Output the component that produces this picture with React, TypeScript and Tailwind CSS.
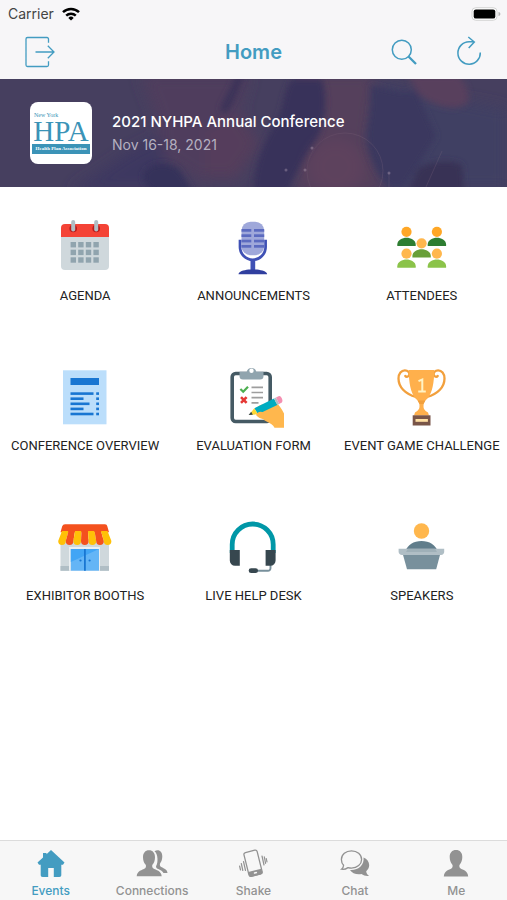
import { useState } from 'react';
import type { ReactNode } from 'react';

function AgendaIcon() {
  return (
    <svg viewBox="0 0 64 64" className="size-16" aria-hidden="true">
      <path d="M8 20h48v31a4 4 0 0 1-4 4H12a4 4 0 0 1-4-4z" fill="#cfd8dc" />
      <path d="M12 9h40a4 4 0 0 1 4 4v9H8v-9a4 4 0 0 1 4-4z" fill="#f44336" />
      <circle cx="20.2" cy="13.5" r="3.8" fill="#b71c1c" />
      <circle cx="43.2" cy="13.5" r="3.8" fill="#b71c1c" />
      <rect x="18.2" y="5" width="4" height="11.5" rx="2" fill="#b0bec5" />
      <rect x="41.2" y="5" width="4" height="11.5" rx="2" fill="#b0bec5" />
      {[27, 34.7, 42.3].map(y =>
        [17.6, 25.2, 32.8, 40.4].map(x => (
          <rect key={`${x}-${y}`} x={x} y={y} width="5.4" height="5.4" fill="#90a4ae" />
        )),
      )}
    </svg>
  );
}

function MicIcon() {
  return (
    <svg viewBox="0 0 64 64" className="size-16" aria-hidden="true">
      <rect x="20.5" y="6.7" width="22.7" height="33.5" rx="9" fill="#9fa8da" />
      {[14, 19.3, 24.7, 30].map(y => (
        <g key={y} fill="#5c6bc0">
          <rect x="20.5" y={y} width="9.8" height="2.7" />
          <rect x="33" y={y} width="10.2" height="2.7" />
        </g>
      ))}
      <path d="M19 24.7V32a12.8 12.8 0 0 0 25.6 0v-7.3" fill="none" stroke="#3f51b5" strokeWidth="2.7" />
      <path d="M29.5 44.5h4.7V56h-4.7z" fill="#3f51b5" />
      <path d="M17.5 59.3c0-3 5-4 10-4.8h8.6c5 .8 10 1.8 10 4.8z" fill="#303f9f" />
    </svg>
  );
}

function Person({ x, y, head, body }: { x: number; y: number; head: string; body: string }) {
  return (
    <g>
      <circle cx={x} cy={y} r="5.1" fill={head} />
      <path d={`M${x - 9.2} ${y + 14.2}v-1.5c0-4.500 5-6.800 9.200-6.800s9.200 2.300 9.200 6.800v1.500z`} fill={body} />
    </g>
  );
}

function AttendeesIcon() {
  return (
    <svg viewBox="0 0 64 64" className="size-16" aria-hidden="true">
      <Person x={16.5} y={16.8} head="#ffa726" body="#2e7d32" />
      <Person x={46.9} y={16.8} head="#ffa726" body="#2e7d32" />
      <Person x={31.6} y={28.3} head="#ffb74d" body="#689f38" />
      <Person x={16.5} y={38.6} head="#ffb74d" body="#8bc34a" />
      <Person x={46.9} y={38.6} head="#ffb74d" body="#8bc34a" />
    </svg>
  );
}

function OverviewIcon() {
  const rows = [[27.3, 23], [32.4, 13], [37.5, 19], [42.6, 13], [47.7, 23]];
  return (
    <svg viewBox="0 0 64 64" className="size-16" aria-hidden="true">
      <rect x="10" y="5.3" width="43.5" height="54" fill="#bbdefb" />
      <rect x="17.5" y="13" width="28.5" height="7" fill="#1976d2" />
      {rows.map(([y, w]) => (
        <g key={y} fill="#1976d2">
          <rect x="17.5" y={y} width={w} height="2.6" />
          <rect x="43.2" y={y} width="2.8" height="2.6" />
        </g>
      ))}
    </svg>
  );
}

function EvaluationIcon() {
  return (
    <svg viewBox="0 0 64 64" className="size-16" aria-hidden="true">
      <rect x="11.2" y="8.5" width="38" height="48" rx="3.5" fill="#fff" stroke="#455a64" strokeWidth="3.6" />
      <path d="M18.5 6.800h7.200a4.900 4.900 0 0 1 9.600 0h7.200v4.200a3.500 3.500 0 0 1-3.500 3.500H22a3.500 3.500 0 0 1-3.500-3.500z" fill="#90a4ae" />
      <circle cx="30.5" cy="5.8" r="2.2" fill="#fff" />
      <path d="M19.4 24l2.8 2.800 4.800-5" fill="none" stroke="#4caf50" strokeWidth="2.2" />
      <path d="M20 32.200l5.600 5.600m0-5.600L20 37.800" stroke="#e53935" strokeWidth="2.6" />
      <path d="M30.5 22.300h11.500M30.500 27.500h11.500M30.500 32.700h11.500M30.500 37.900h7" stroke="#9e9e9e" strokeWidth="1.7" />
      <path d="M34 44c3-2.500 5-4.500 9-4.500l13-1c2 1.500 4.500 5 7 10v14.300H53.500c-1.500-3-4-4.300-7.500-6-4-1.800-6-5-8-8.300z" fill="#ffb74d" />
      <path d="M33.300 43.300L53 33.600l3.300 6.300-19.400 9.300z" fill="#00acc1" />
      <path d="M53 33.600l2-1 3.200 6.400-1.900.9z" fill="#b0bec5" />
      <path d="M55 32.600l3-1.500c2-.7 4.800 4.800 2.700 6.300l-2.500 1.500z" fill="#f48fb1" />
      <path d="M33.300 43.300l3.600 6-8.900.7z" fill="#fdd835" />
      <path d="M30.200 46.800l1.700 2.900-4.300.4z" fill="#37474f" />
      <path d="M35 50c1.500-3.500 5-4 8-2.200l-1 6.200c-3-.5-5-1.800-7-4z" fill="#ffb74d" />
    </svg>
  );
}

function TrophyIcon() {
  return (
    <svg viewBox="0 0 64 64" className="size-16" aria-hidden="true">
      <g fill="none" stroke="#f2a03d" strokeWidth="2.3" strokeLinecap="round">
        <path d="M26 32C15 29 8.500 22 8.500 13.500c0-5 3-8.200 6.300-8.200 3.200 0 5 2.200 4.500 4.500-.4 2-3 2.600-4 1.200" />
        <path d="M37 32c11-3 17.500-10 17.500-18.500 0-5-3-8.200-6.300-8.200-3.200 0-5 2.200-4.500 4.500.4 2 3 2.600 4 1.200" />
      </g>
      <path d="M18.700 5h25.600c-.2 12.500-1.800 22.500-6.800 28.500-3 2.600-4 4.200-4 7.500 0 3.500 1.500 4.500 4.500 6.500l1 3H24l1-3c3-2 4.500-3 4.500-6.500 0-3.300-1-4.900-4-7.500-5-6-6.600-16-6.800-28.500z" fill="#ffb04c" />
      <path d="M27.500 35.500h8l-2 3.500h-4z" fill="#f2a03d" />
      <path d="M28.500 16.200l3.800-1.700v12M28.200 26.500h7.600" fill="none" stroke="#fff3c4" strokeWidth="2" />
      <rect x="22.7" y="50.3" width="17.8" height="10.2" fill="#795548" />
      <rect x="25.5" y="54" width="12.4" height="2.8" fill="#ffe0a3" />
    </svg>
  );
}

function BoothIcon() {
  const stripes = ['#ffc107', '#f4511e', '#ffc107', '#f4511e', '#ffc107', '#f4511e', '#ffc107'];
  return (
    <svg viewBox="0 0 64 64" className="size-16" aria-hidden="true">
      <path d="M7.5 24h48.500v31.700H7.500z" fill="#cfd8dc" />
      <path d="M7.5 51h9v4.700h-9zM47 51h9v4.700h-9z" fill="#b0bec5" />
      <path d="M16 32h31v23.700H16z" fill="#eceff1" />
      <path d="M17.800 34h28.200v21.700H17.800z" fill="#64b5f6" />
      <path d="M17.800 34H46L17.800 47z" fill="#42a5f5" />
      <path d="M31.900 34v21.700" stroke="#1976d2" strokeWidth="1.8" />
      <circle cx="27.5" cy="45.5" r="1.1" fill="#1976d2" />
      <circle cx="36.6" cy="45.5" r="1.1" fill="#1976d2" />
      <path d="M12 9.300h40a2.500 2.500 0 0 1 2.300 2l1.700 6H7.500l1.700-6a3 3 0 0 1 2.800-2z" fill="#f4511e" />
      {stripes.map((fill, i) => {
        // each stripe fans out from the roof bar to the scalloped edge
        const top = 9 + i * 6.5;
        const low = 5.2 + i * 7.6;
        return <path key={i} d={`M${top} 16h6.5L${low + 7.6} 26a3.8 4 0 0 1-7.6 0z`} fill={fill} />;
      })}
    </svg>
  );
}

function HeadsetIcon() {
  return (
    <svg viewBox="0 0 64 64" className="size-16" aria-hidden="true">
      <path d="M11.200 38V29.500a20.500 20.500 0 0 1 41 0V38" fill="none" stroke="#0097a7" strokeWidth="4.8" />
      <path d="M49.500 49v4.300a2.500 2.500 0 0 1-2.500 2.500H35" fill="none" stroke="#78909c" strokeWidth="1.9" />
      <path d="M8.800 35h10v15.700H14a5.200 5.200 0 0 1-5.200-5.200zM54.600 35h-10v15.700h4.800a5.200 5.200 0 0 0 5.200-5.200z" fill="#37474f" />
      <rect x="27.7" y="53.2" width="9.3" height="4.9" rx="2.4" fill="#37474f" />
    </svg>
  );
}

function SpeakerIcon() {
  return (
    <svg viewBox="0 0 64 64" className="size-16" aria-hidden="true">
      <circle cx="31.5" cy="16" r="7.7" fill="#ffb74d" />
      <path d="M15.500 36c2-6 8-10 16-10s14 4 16 10z" fill="#607d8b" />
      <path d="M12.500 38h38l-4.300 16.300H17z" fill="#78909c" />
      <path d="M8.600 33.800h45.600V37c0 1.500-1.300 3-3.200 3H12c-2 0-3.400-1.500-3.400-3z" fill="#b0bec5" />
      <path d="M18 33.800h27l2 3.200H16z" fill="#9fb0b8" />
    </svg>
  );
}

const MENU: { label: string; icon: ReactNode }[] = [
  { label: 'AGENDA', icon: <AgendaIcon /> },
  { label: 'ANNOUNCEMENTS', icon: <MicIcon /> },
  { label: 'ATTENDEES', icon: <AttendeesIcon /> },
  { label: 'CONFERENCE OVERVIEW', icon: <OverviewIcon /> },
  { label: 'EVALUATION FORM', icon: <EvaluationIcon /> },
  { label: 'EVENT GAME CHALLENGE', icon: <TrophyIcon /> },
  { label: 'EXHIBITOR BOOTHS', icon: <BoothIcon /> },
  { label: 'LIVE HELP DESK', icon: <HeadsetIcon /> },
  { label: 'SPEAKERS', icon: <SpeakerIcon /> },
];

const TABS: { label: string; icon: ReactNode }[] = [
  {
    label: 'Events',
    icon: <path d="M16 1l13.500 12.500-1.500 2.200h-1.700V26c0 1.300-.6 2-2 2h-5.500v-9h-5.600v9H7.700c-1.400 0-2-.7-2-2V15.700H4l-1.500-2.200L8 8.400V4h3.500v1.200z" />,
  },
  {
    label: 'Connections',
    icon: (
      <>
        <path d="M18.500 2.300c1-.7 2-1 3-1 3 0 4.800 2.400 4.800 6 0 3-.8 5.300-2 6.600-.8 1-.5 3 .5 3.800 2.500 1.700 6.500 2.200 6.700 6.300h-4c-1.500-3-5-3.600-6.700-4.800-.9-.7-1-2-.3-2.900C22 14 22.300 5 18.500 2.300z" />
        <path d="M13 1.200c3.800 0 6 2.700 6 7 0 3.200-.9 5.600-2.400 7.300-.7.900-.5 3.100.5 3.800 3 2 8.200 2.300 8.600 8H.7c.4-5.700 5.500-6 8.400-8 1-.7 1.200-2.900.4-3.800C8 13.800 7 11.400 7 8.200c0-4.300 2.200-7 6-7z" />
      </>
    ),
  },
  {
    label: 'Shake',
    icon: (
      <>
        <g transform="rotate(-14 16 14)">
          <rect x="9.2" y="2" width="13.6" height="24.5" rx="2" fill="none" stroke="currentColor" strokeWidth="1.3" />
          <path d="M9.200 21.500h13.600v3.500a2 2 0 0 1-2 2h-9.600a2 2 0 0 1-2-2z" />
          <rect x="14.3" y="23.3" width="3.4" height="1.6" rx=".8" fill="#f7f7f7" />
        </g>
        <path d="M6.500 12.500l2 9M4.300 14.500l1.500 7M2.600 17l.9 4M25 7l2 9M27.300 7.800l1.300 6.500M29.300 9.500l.7 3.500" fill="none" stroke="currentColor" strokeWidth="1.2" strokeLinecap="round" />
      </>
    ),
  },
  {
    label: 'Chat',
    icon: (
      <>
        <path d="M24.500 8.500c3.500 1.500 5.700 4.300 5.700 7.500 0 2.800-1.500 4.800-3 6.300.2 2.200 1.200 3.400 2.900 4.600-2.900.3-5.600-.3-7.600-1.800-5 .9-9.500-.9-11.500-4.100 8.500.5 14.500-5 13.500-12.500z" />
        <path d="M12.500 1.800c5.700 0 10.100 3.800 10.100 8.600s-4.400 8.700-10.100 8.700c-1.200 0-2.400-.2-3.500-.5-1.700 1.200-4.200 2-6.500 1.600 1.300-1 2-2.200 2.100-3.900C3.200 14.800 2.400 12.900 2.400 10.400c0-4.800 4.400-8.600 10.100-8.600z" fill="#f7f7f7" stroke="currentColor" strokeWidth="1.3" />
      </>
    ),
  },
  {
    label: 'Me',
    icon: <path d="M16 1c4 0 6.300 2.700 6.300 7 0 3.300-1 5.800-2.500 7.500-.8.900-.5 3 .5 3.700 2.700 1.900 7.500 2.200 7.900 8.300H3.800c.4-6.100 5.200-6.400 7.900-8.300 1-.7 1.300-2.800.5-3.700-1.500-1.700-2.500-4.200-2.500-7.500 0-4.300 2.300-7 6.300-7z" />,
  },
];

function StatusBar() {
  return (
    <div className="flex h-7 items-center justify-between pl-2 pr-[6px] text-sm text-[#444]">
      <div className="flex items-center gap-2">
        <span>Carrier</span>
        <svg viewBox="0 0 18 14" className="h-[14px] w-[18px]" fill="none" stroke="#000" strokeWidth="2.5" aria-hidden="true">
          <path d="M1 5.200a11.500 11.500 0 0 1 16 0M4.200 8.600a7 7 0 0 1 9.600 0" />
          <path d="M9 13.500L6.300 10.900a3.900 3.900 0 0 1 5.400 0z" fill="#000" stroke="none" />
        </svg>
      </div>
      <svg viewBox="0 0 30 14" className="h-[14px] w-[30px]" aria-hidden="true">
        <rect x="1" y=".7" width="25" height="12.6" rx="3.8" fill="#fff" stroke="#d4d4d4" />
        <rect x="2.7" y="2.4" width="21.6" height="9.2" rx="2.2" fill="#000" />
        <path d="M27.500 5v4c1.300-.4 1.900-1.200 1.900-2s-.6-1.600-1.900-2z" fill="#b5b5b5" />
      </svg>
    </div>
  );
}

function NavBar() {
  return (
    <div className="grid h-[51px] grid-cols-3 items-center px-6 pb-1 text-[#439cc1]">
      <button aria-label="Log out" className="justify-self-start">
        <svg viewBox="0 0 32 32" className="size-8" fill="none" stroke="currentColor" strokeWidth="1.3" aria-hidden="true">
          <path d="M24.500 6.800V3a1.500 1.500 0 0 0-1.500-1.500H3.500A1.500 1.500 0 0 0 2 3v26a1.500 1.500 0 0 0 1.500 1.500H23a1.500 1.500 0 0 0 1.500-1.500v-3.800M11.500 16H30M23.800 9.700L30 16l-6.200 6.300" />
        </svg>
      </button>
      <h1 className="text-center text-xl font-semibold">Home</h1>
      <div className="flex gap-8 justify-self-end">
        <button aria-label="Search">
          <svg viewBox="0 0 32 32" className="size-8" fill="none" stroke="currentColor" aria-hidden="true">
            <circle cx="14.8" cy="13.8" r="9.5" strokeWidth="1.5" />
            <path d="M21.500 20.500l7.500 7.500" strokeWidth="2.3" />
          </svg>
        </button>
        <button aria-label="Refresh">
          <svg viewBox="0 0 32 32" className="size-8" fill="none" stroke="currentColor" strokeWidth="1.5" aria-hidden="true">
            <path d="M29.300 16.500A11.200 11.200 0 1 1 18.100 5.800h5.200M17.300 1l6 5-5.600 6" />
          </svg>
        </button>
      </div>
    </div>
  );
}

function EventBanner() {
  return (
    <section className="relative flex h-[108px] items-center gap-5 overflow-hidden bg-[#463f5f] px-[30px]">
      <svg viewBox="0 0 507 108" preserveAspectRatio="none" className="absolute inset-0 size-full" aria-hidden="true">
        <defs>
          <filter id="soft" x="-20%" y="-20%" width="140%" height="140%">
            <feGaussianBlur stdDeviation="7" />
          </filter>
          <filter id="edge" x="-20%" y="-20%" width="140%" height="140%">
            <feGaussianBlur stdDeviation="3" />
          </filter>
        </defs>
        <g filter="url(#soft)">
          <path d="M140-5h110l-15 50-30 60-40-25-10-45z" fill="#503e5d" />
          <path d="M205 50l35-15 20 30-25 35-30-2z" fill="#553c5b" />
          <path d="M300-5h75l-8 70 20 50H295z" fill="#553f5c" />
          <path d="M375 5l132 25v80H385z" fill="#413f64" />
          <path d="M70 112l60-40 30-15 10 55z" fill="#3c3760" />
        </g>
        <g filter="url(#edge)">
          <path d="M292 0h30c6 18 4 40-4 58-8 12-22 34-30 54h-35c2-30 12-52 24-70 8-16 6-30 15-42z" fill="#39325a" />
          <path d="M371 6c18 4 30 10 45 6l20 45-32 51h-15c-16-18-22-38-22-55 3-14 5-32 4-47z" fill="#3b375f" />
          <path d="M408-4h50c8 8 12 18 10 28-14 10-38 2-50-10z" fill="#593f5d" />
          <path d="M220 30c6-12 12-24 16-34h8c-6 16-10 28-19 40z" fill="#3a3358" />
          <path d="M144 94c8-12 26-12 36-2l14 22h-35c-12-4-18-12-15-20z" fill="#36305a" />
          <path d="M418 90c12-8 34-10 44-4l2 26h-55z" fill="#383155" />
        </g>
        <g fill="none" stroke="#8a6f84" opacity=".22">
          <circle cx="345" cy="92" r="38" />
          <circle cx="336" cy="88" r="29" fill="#7d4863" stroke="none" filter="url(#soft)" />
          <path d="M442 72l-16 36M389 94v14" />
        </g>
        <g fill="#c6b1c4" opacity=".35">
          <circle cx="312" cy="69" r="1.5" />
          <circle cx="286" cy="91" r="1.5" />
          <circle cx="305" cy="91" r="1.5" />
          <circle cx="389" cy="94" r="1.5" />
        </g>
      </svg>
      <div className="relative flex size-[62px] shrink-0 flex-col justify-center rounded-lg bg-white px-[2px] font-['Liberation_Serif',serif] text-[#3b93b7]">
        <span className="pl-[2px] text-[6px] leading-[7px]">New York</span>
        <span className="text-center text-[29px] leading-[25px]">HPA</span>
        <span className="whitespace-nowrap bg-[#3b93b7] text-center text-[5px] font-bold leading-[10px] text-white">Health Plan Association</span>
      </div>
      <div className="relative">
        <h2 className="text-[15px] font-medium leading-6 text-white">2021 NYHPA Annual Conference</h2>
        <p className="text-sm leading-[22px] text-[#b5b0c0]">Nov 16-18, 2021</p>
      </div>
    </section>
  );
}

export default function App() {
  const [active, setActive] = useState('Events');

  return (
    <div className="flex min-h-screen flex-col bg-white font-['Inter',sans-serif]">
      <header className="bg-[#f7f6f8]">
        <StatusBar />
        <NavBar />
      </header>

      <main className="flex-1">
        <EventBanner />
        <div className="grid grid-cols-3 gap-y-[60px] px-px pt-7">
          {MENU.map(item => (
            <button key={item.label} className="flex flex-col items-center gap-2">
              {item.icon}
              <span className="whitespace-nowrap font-['Roboto',sans-serif] text-[13px] leading-[18px] text-[#222]">{item.label}</span>
            </button>
          ))}
        </div>
      </main>

      <nav className="grid h-[60px] grid-cols-5 border-t border-[#dcdcdc] bg-[#f7f7f7]">
        {TABS.map(tab => (
          <button
            key={tab.label}
            onClick={() => setActive(tab.label)}
            className={`flex flex-col items-center gap-1 pt-2 text-xs font-medium ${
              active === tab.label ? 'text-[#439cc1]' : 'text-[#929292]'
            }`}
          >
            <svg viewBox="0 0 32 30" className="h-[30px] w-8" fill="currentColor" aria-hidden="true">{tab.icon}</svg>
            <span>{tab.label}</span>
          </button>
        ))}
      </nav>
    </div>
  );
}
